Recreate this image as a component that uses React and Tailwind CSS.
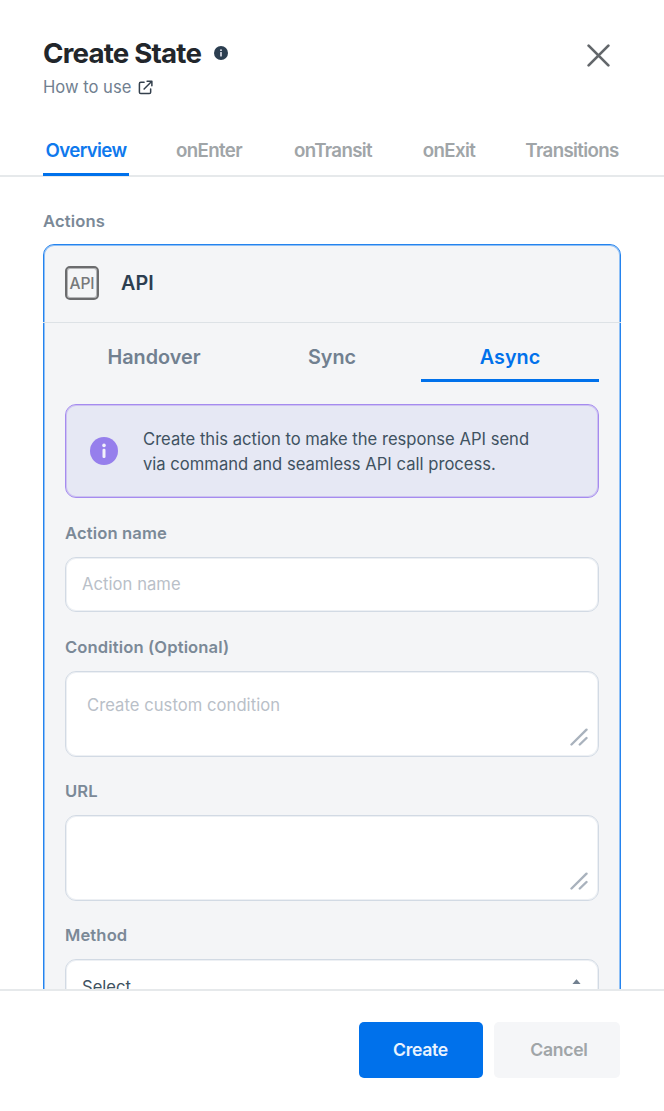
import React from "react";

const tabs = [
  { label: "Overview", box: "w-[86px]", active: true },
  { label: "onEnter", box: "ml-[36px] w-[88px]" },
  { label: "onTransit", box: "ml-[31px] w-[98px]" },
  { label: "onExit", box: "ml-[27px] w-[80px]" },
  { label: "Transitions", box: "ml-[27px] w-[112px]" },
];

function InfoDot({ className }) {
  return (
    <svg viewBox="0 0 28 28" className={className}>
      <circle cx="14" cy="14" r="14" fill="currentColor" />
      <circle cx="14" cy="8.4" r="1.8" fill="#f2f2fb" />
      <rect x="12.5" y="11.8" width="3" height="9.2" rx="1.2" fill="#f2f2fb" />
    </svg>
  );
}

function Grip() {
  return (
    <svg viewBox="0 0 18 18" className="h-[18px] w-[18px] text-[#a9b2bd]" fill="none" stroke="currentColor" strokeWidth="2.4" strokeLinecap="round">
      <path d="M1.5 16.5 L16.5 1.7 M9.8 16.5 L16.5 10" />
    </svg>
  );
}

function Label({ children, className }) {
  return (
    <div className={"h-6 text-[16.6px] leading-6 font-semibold tracking-[0.12px] whitespace-nowrap text-[#7b8997] " + className}>{children}</div>
  );
}

function TextArea({ placeholder }) {
  return (
    <div className="mt-3 flex h-[86px] items-end justify-between rounded-[11px] border border-[#d2dae4] bg-white pr-[10px] pb-[10px] pl-[21px] shadow-[inset_0_0_0_1px_#edf0f4]">
      <span className="self-start pt-[21px] text-[16.6px] leading-6 tracking-[0.05px] text-[#b9c0c8]">{placeholder}</span>
      <Grip />
    </div>
  );
}

export default function App() {
  return (
    <div className="flex h-[1111px] w-[664px] flex-col overflow-hidden bg-white font-['Inter',sans-serif]">
      <header className="flex h-[125px] shrink-0 justify-between pr-[54px] pl-[43px]">
        <div className="pt-[36px]">
          <div className="flex h-[34px] items-center">
            <h1 className="w-[158px] text-[27.7px] leading-[34px] font-bold tracking-[-0.8px] whitespace-nowrap text-[#22262b]">Create State</h1>
            <InfoDot className="ml-[13px] h-[14px] w-[14px] text-[#2c3e50]" />
          </div>
          <div className="mt-[5px] flex h-6 items-center gap-[7px] text-[16.6px] leading-6 text-[#718090]">
            <span>How to use</span>
            <svg viewBox="0 0 16 16" className="h-[15px] w-[15px] text-[#34404d]" fill="none" stroke="currentColor" strokeWidth="1.6" strokeLinecap="round" strokeLinejoin="round">
              <path d="M6.5 2.5H3Q1.5 2.5 1.5 4V13Q1.5 14.5 3 14.5H12Q13.5 14.5 13.5 13V9.5 M6.5 9.7L14.5 1.7 M9.7 1.3H14.8V6.2" />
            </svg>
          </div>
        </div>
        <svg viewBox="0 0 24 24" className="mt-[44px] h-[23px] w-[23px] text-[#63676b]" fill="none" stroke="currentColor" strokeWidth="2.8" strokeLinecap="round">
          <path d="M1.7 1.7L22.3 22.3M22.3 1.7L1.7 22.3" />
        </svg>
      </header>

      <nav className="flex h-[52px] shrink-0 border-b-2 border-[#e6e9eb] pl-[43px]">
        {tabs.map((t) => (
          <div
            key={t.label}
            className={
              "flex h-[51px] justify-center border-b-3 pt-[14px] text-[18.7px] leading-6 font-semibold tracking-[-0.65px] whitespace-nowrap " +
              t.box + " " +
              (t.active ? "border-[#0071eb] text-[#0f79ed]" : "border-transparent text-[#a0a5a8]")
            }
          >
            {t.label}
          </div>
        ))}
      </nav>

      <main className="min-h-0 flex-1 overflow-hidden px-[43px] pt-[32px]">
        <Label className="">Actions</Label>
        <section className="mt-[11px] h-[900px] w-[578px] rounded-t-[11px] border border-[#2483ee] bg-[#f4f5f7] shadow-[inset_0_0_0_1px_#8fc0f6]">
          <div className="-mx-px flex h-[78px] items-center border-b border-[#dde2e6] pl-[22px]">
            <div className="-mt-px flex h-[34px] w-[34px] items-center justify-center rounded-[5px] border-2 border-[#6b6c6e] pt-[2px] text-[15.6px] leading-none font-medium tracking-[-0.1px] text-[#77787a] shadow-[inset_0_0_0_1px_#b4b5b7]">
              <span>API</span>
            </div>
            <span className="-mt-px ml-[22px] text-[19.8px] leading-6 font-semibold text-[#2c3e50]">API</span>
          </div>
          <div className="px-[21px]">
            <div className="grid h-[59px] grid-cols-3 text-center text-[19.8px] leading-6 font-semibold text-[#718090]">
              <div className="pt-[22px]">Handover</div>
              <div className="pt-[22px]">Sync</div>
              <div className="border-b-3 border-[#0071eb] pt-[22px] text-[#0071eb]">Async</div>
            </div>
            <div className="mt-[22px] flex h-[94px] items-center rounded-[11px] border border-[#a58bef] bg-[#e6e8f4] pl-[24px] shadow-[inset_0_0_0_1px_#cdc2f1]">
              <InfoDot className="h-7 w-7 shrink-0 text-[#967fec]" />
              <p className="ml-[25px] pt-[2px] text-[16.6px] leading-[25px] tracking-[0.01px] whitespace-nowrap text-[#405261]">
                Create this action to make the response API send
                <br />
                via command and seamless API call process.
              </p>
            </div>
            <Label className="mt-[23px]">Action name</Label>
            <div className="mt-3 flex h-[55px] items-center rounded-[11px] border border-[#d2dae4] bg-white pl-4 text-[16.6px] tracking-[0.05px] text-[#b9c0c8] shadow-[inset_0_0_0_1px_#edf0f4]">
              Action name
            </div>
            <Label className="mt-[23px]">Condition (Optional)</Label>
            <TextArea placeholder="Create custom condition" />
            <Label className="mt-[22px]">URL</Label>
            <TextArea placeholder="" />
            <Label className="mt-[22px]">Method</Label>
            <div className="mt-3 flex h-[56px] items-center justify-between rounded-[11px] border border-[#d2dae4] bg-white pr-[17px] pl-4 text-[16.6px] text-[#405261] shadow-[inset_0_0_0_1px_#edf0f4]">
              <span>Select</span>
              <svg viewBox="0 0 9 17" className="h-[17px] w-[9px]" fill="#718090">
                <path d="M0.4 5L4.5 0.2L8.6 5ZM0.4 12L4.5 16.8L8.6 12Z" />
              </svg>
            </div>
          </div>
        </section>
      </main>

      <footer className="flex h-[122px] shrink-0 justify-end gap-[11px] border-t-2 border-[#e6e9eb] pt-[31px] pr-[44px] text-[17.6px] font-semibold">
        <button className="h-[56px] w-[124px] rounded-[5px] bg-[#0071eb] pr-px tracking-[-0.3px] text-[#e9f3fe]">Create</button>
        <button className="h-[56px] w-[126px] rounded-[5px] bg-[#f5f6f8] pl-[4px] tracking-[-0.3px] text-[#a0a5a8]">Cancel</button>
      </footer>
    </div>
  );
}
